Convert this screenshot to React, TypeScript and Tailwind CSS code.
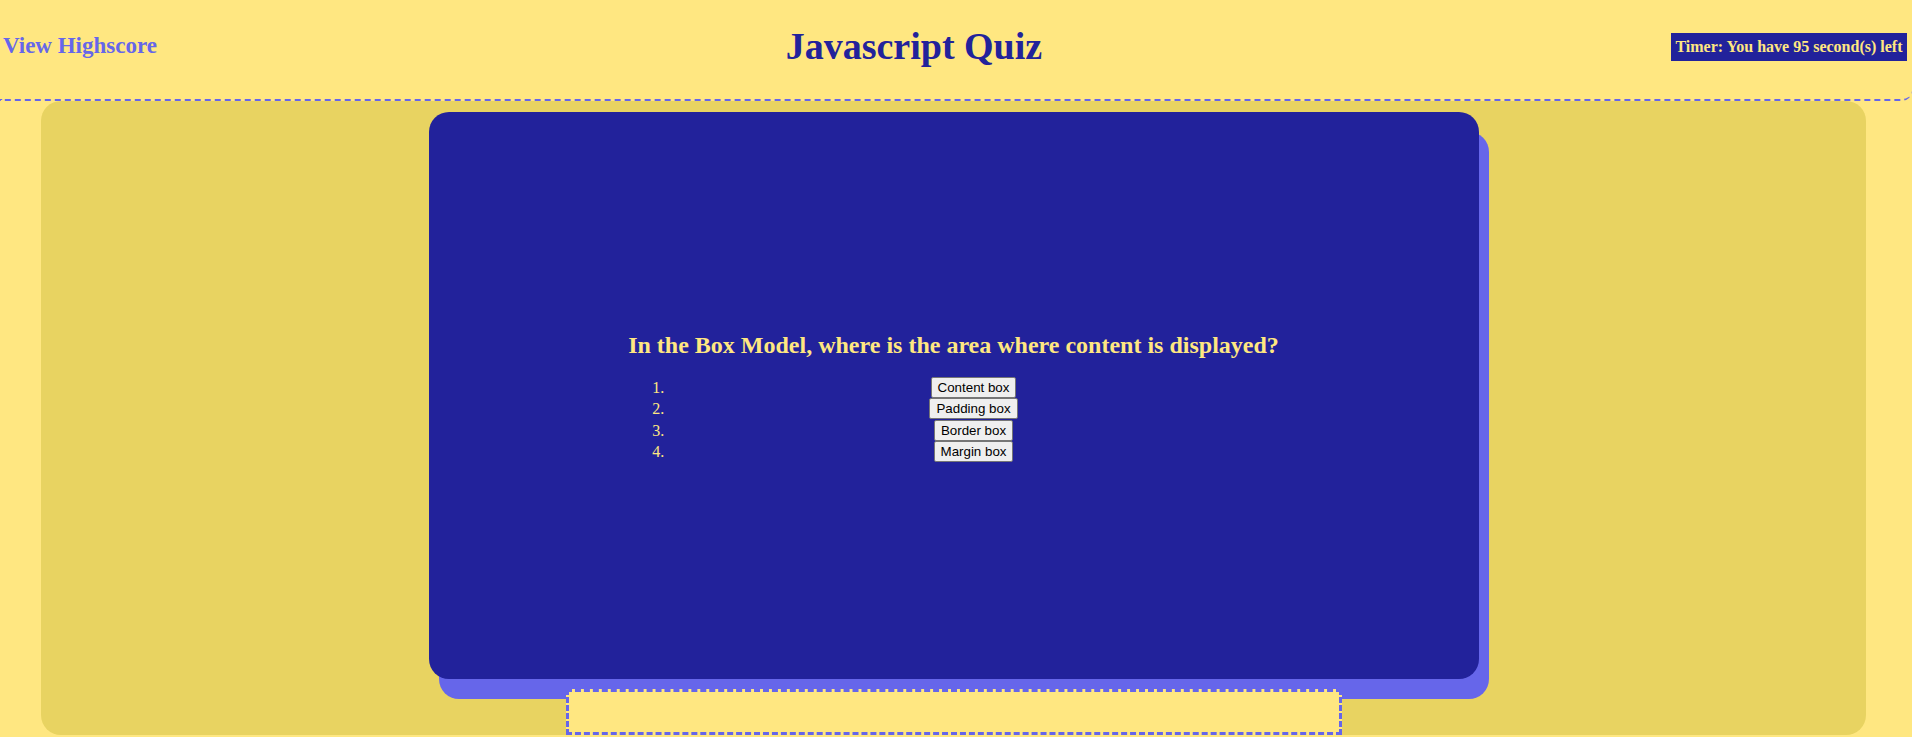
import React from "react";

const answers = ["Content box", "Padding box", "Border box", "Margin box"];

export default function App() {
  return (
    <div className="min-h-screen w-full bg-[#ffe781] font-['Liberation_Serif',serif] overflow-hidden">
      <header className="flex h-[101px] items-center justify-between border-b-2 border-dashed border-[#6666ea] rounded-br-[10px] pb-[6px] pl-[3px] pr-[5px]">
        <a className="text-[23px] font-bold leading-normal text-[#6666ea] cursor-pointer">
          View Highscore
        </a>
        <h1 className="text-[38px] font-bold leading-normal text-[#22229b]">
          Javascript Quiz
        </h1>
        <div className="flex h-[28px] items-center bg-[#22229b] px-[4.5px] text-[16px] font-bold text-[#ffe781]">
          Timer: You have 95 second(s) left
        </div>
      </header>

      <main className="ml-[41px] flex h-[634px] w-[1825px] flex-col items-center rounded-[20px] bg-[#e8d361] pt-[11px]">
        <section className="flex h-[567px] w-[1050px] shrink-0 items-center justify-center rounded-[20px] bg-[#22229b] shadow-[10px_20px_0_#6666ea]">
          <div className="pt-[2px]">
            <h2 className="mb-[18px] text-[24px] font-bold leading-[28px] text-[#ffe781]">
              In the Box Model, where is the area where content is displayed?
            </h2>
            <ol className="list-decimal pl-[40px] text-[16px] text-[#ffe781]">
              {answers.map((a) => (
                <li key={a} className="h-[21.3px] text-center leading-[21.3px]">
                  <button className="inline-block h-[21px] rounded-[2px] border border-[#767676] bg-[#efefef] px-[6px] align-top font-['Liberation_Sans',Arial,sans-serif] text-[13.33px] leading-[19px] text-black">
                    {a}
                  </button>
                </li>
              ))}
            </ol>
          </div>
        </section>
        <footer className="mt-[10px] h-[46px] w-[776px] shrink-0 border-[3px] border-dashed border-[#6666ea] bg-[#ffe781]" />
      </main>
    </div>
  );
}
